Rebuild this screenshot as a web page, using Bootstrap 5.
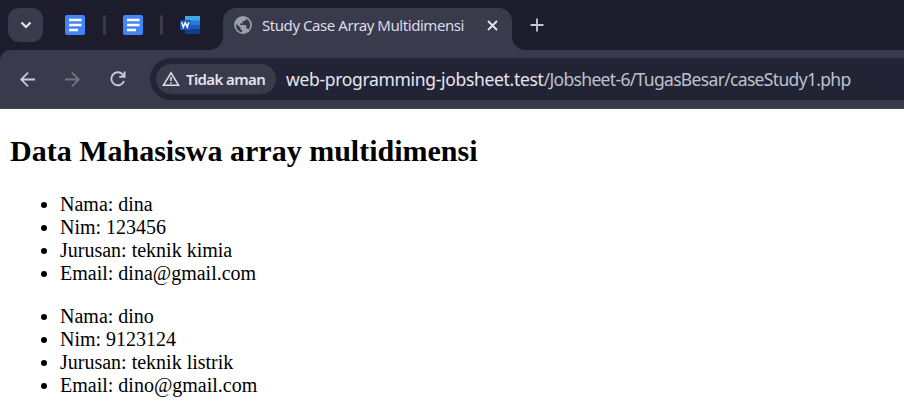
<!DOCTYPE html>
<html lang="id">
<head>
<meta charset="utf-8">
<title>Study Case Array Multidimensi</title>
<meta name="viewport" content="width=device-width, initial-scale=1">
<link href="https://cdn.jsdelivr.net/npm/bootstrap@5.3.0/dist/css/bootstrap.min.css" rel="stylesheet">
<style>
body{background:#fff;color:#000;height:100vh;overflow:hidden;font-family:"Noto Sans",sans-serif}
.tabstrip{height:50px;background:#1c1c2c}
.tab-search{width:35px;height:34px;border-radius:11px;background:#393a4c;margin:8px 22px 0 8px}
.pin{width:20px;height:20px;margin-top:15px}
.tab-sep{width:3px;height:20px;margin:15px 17px 0;border-radius:2px;background:#393a4c}
.tab-sep-first{margin-left:18px}
.active-tab{width:289px;height:42px;margin:8px 0 0 23px;background:#393a4c;border-radius:13px 13px 0 0}
.active-tab::before,.active-tab::after{content:"";position:absolute;bottom:0;width:13px;height:13px}
.active-tab::before{right:100%;background:radial-gradient(circle at 0 0,transparent 12.5px,#393a4c 13px)}
.active-tab::after{left:100%;background:radial-gradient(circle at 100% 0,transparent 12.5px,#393a4c 13px)}
.globe{margin:8px 0 0 11px}
.close-x{margin:12px 0 0 23px}
.new-tab{margin:18px 0 0 18px}
.tab-title{font-size:15px;line-height:35px;color:#dcdce8;white-space:nowrap;margin-left:10px;width:202px;letter-spacing:-.44px}
.toolbar-wrap{background:#1c1c2c}
.toolbar{height:59px;background:#393a4c;border-radius:10px 0 0 0;border-bottom:1px solid #4b4a53;padding:8px 0 8px 17px}
.nav-icons{width:111px;height:42px;gap:30px;padding-left:3px}
.omnibox{height:42px;background:#222436;border-radius:21px 0 0 21px;padding-left:6px;margin-left:22px}
.chip{width:120px;height:30px;border-radius:15px;background:#393a4c;padding-left:6px}
.chip-text{font-size:15px;font-weight:600;color:#e2e2ee;margin-left:6px;letter-spacing:-.6px;line-height:30px}
.url{font-size:17.5px;color:#e6e6f2;margin-left:10px;line-height:42px;letter-spacing:-.32px}
.url-path{color:#bfc1cd;letter-spacing:-.67px}
.page{font-family:"Liberation Serif",serif;font-size:20px;line-height:23px;padding:25px 10px 0}
.page h2{font-size:30px;font-weight:700;line-height:34px;margin-bottom:25px}
.page ul{padding-left:50px;margin-bottom:20px}
</style>
<script src="https://cdn.jsdelivr.net/npm/bootstrap@5.3.0/dist/js/bootstrap.bundle.min.js"></script>
</head>
<body>
<header>
  <div class="tabstrip d-flex align-items-start">
    <div class="tab-search d-flex align-items-center justify-content-center flex-shrink-0">
      <svg width="12" height="8" viewBox="0 0 12 8" fill="none" stroke="#e4e4ee" stroke-width="2.200"><path d="M1.500 1.500 6 6l4.500-4.500"/></svg>
    </div>
    <svg class="pin flex-shrink-0" viewBox="0 0 20 20"><rect width="20" height="20" rx="2" fill="#4385f5"/><path d="M4 5h12.500M4 10h12.500M4 15h9" stroke="#fff" stroke-width="2.400"/></svg>
    <div class="tab-sep tab-sep-first flex-shrink-0"></div>
    <svg class="pin flex-shrink-0" viewBox="0 0 20 20"><rect width="20" height="20" rx="2" fill="#4385f5"/><path d="M4 5h12.500M4 10h12.500M4 15h9" stroke="#fff" stroke-width="2.400"/></svg>
    <div class="tab-sep flex-shrink-0"></div>
    <svg class="pin flex-shrink-0" viewBox="0 0 20 20"><path d="M5 1h15v5H5z" fill="#41a5ee"/><path d="M5 5.500h15V10H5z" fill="#2b7cd3"/><path d="M5 10h15v4.500H5z" fill="#185abd"/><path d="M5 14.500h15V19H5z" fill="#103f91"/><rect y="5" width="10.500" height="10" rx="1" fill="#185abd"/><path d="m1.800 7.200 1.500 5 2-4.500 2 4.500 1.500-5" fill="none" stroke="#fff" stroke-width="1.500"/></svg>
    <div class="active-tab position-relative d-flex flex-shrink-0">
      <svg class="globe flex-shrink-0" width="18" height="18" viewBox="0 0 18 18"><circle cx="9" cy="9" r="8.900" fill="#9aa0a6"/><path d="M2 8l4.400 3.500v.8c0 1 .7 1.700 1.700 1.800v2.200C4.500 15.900 1.700 12.800 2 8zM14.200 4c2.700 2.800 2.500 7 .3 9.500-.3-.8-.9-1.100-1.600-1.100h-.7V10c0-.6-.3-.9-.9-.9H6.100V7.400h1.700c.5 0 .9-.4.900-.9V4.900h1.700c1 0 1.600-.6 1.600-2.200z" fill="#393a4c"/></svg>
      <div class="tab-title">Study Case Array Multidimensi</div>
      <svg class="close-x flex-shrink-0" width="11" height="11" viewBox="0 0 11 11" stroke="#e4e4ee" stroke-width="1.800"><path d="m1 1 9 9m0-9-9 9"/></svg>
    </div>
    <svg class="new-tab flex-shrink-0" width="14" height="14" viewBox="0 0 14 14" stroke="#c5c5dc" stroke-width="1.800"><path d="M7 .5v13M.5 7h13"/></svg>
  </div>
  <div class="toolbar-wrap"><div class="toolbar d-flex">
    <div class="nav-icons d-flex align-items-center flex-shrink-0">
      <svg width="15" height="15" viewBox="0 0 15 15" fill="none" stroke="#c9c9de" stroke-width="1.800"><path d="M15 7.500H1.500M8 .7 1.200 7.500 8 14.300"/></svg>
      <svg width="15" height="15" viewBox="0 0 15 15" fill="none" stroke="#74747f" stroke-width="1.800"><path d="M0 7.500h13.500M7 .7l6.800 6.800L7 14.300"/></svg>
      <svg width="16" height="16" viewBox="0 0 16 16" fill="none" stroke="#c9c9de" stroke-width="1.900"><path d="M14 10A6.500 6.500 0 1 1 12.600 3.300l1.700 2M14.600.5v5.200H9.300"/></svg>
    </div>
    <div class="omnibox d-flex align-items-center flex-grow-1">
      <div class="chip d-flex align-items-center flex-shrink-0">
        <svg class="flex-shrink-0" width="18" height="16" viewBox="0 0 18 16" fill="none" stroke="#dcdce8" stroke-width="1.600"><path d="M9 1.800 1.500 14.200h15zM9 6v4M9 11.200v1.500"/></svg>
        <span class="chip-text text-nowrap">Tidak aman</span>
      </div>
      <div class="url text-nowrap">web-programming-jobsheet.test<span class="url-path">/Jobsheet-6/TugasBesar/caseStudy1.php</span></div>
    </div>
  </div></div>
</header>
<main class="page">
  <h2>Data Mahasiswa array multidimensi</h2>
  <ul><li>Nama: dina</li><li>Nim: 123456</li><li>Jurusan: teknik kimia</li><li>Email: dina@gmail.com</li></ul>
  <ul><li>Nama: dino</li><li>Nim: 9123124</li><li>Jurusan: teknik listrik</li><li>Email: dino@gmail.com</li></ul>
</main>
</body>
</html>
